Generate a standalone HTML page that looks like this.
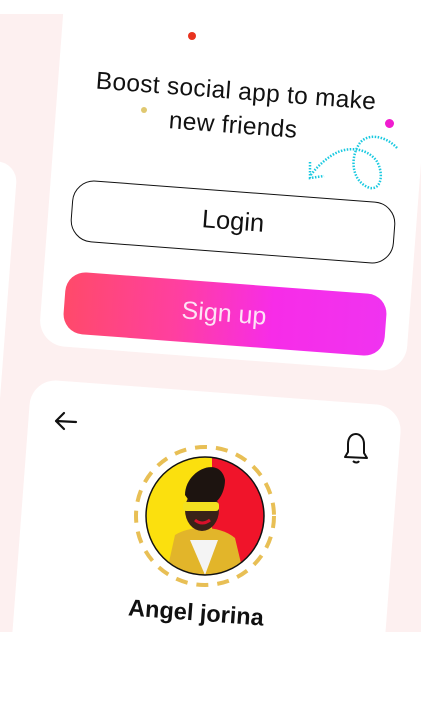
<!DOCTYPE html>
<html><head><meta charset="utf-8"><style>
html,body{margin:0;padding:0;width:421px;height:712px;background:#fff;overflow:hidden;font-family:"Liberation Sans",sans-serif;position:relative}
#bg{position:absolute;left:0;top:14px;width:421px;height:618px;background:#fdf0f0;overflow:hidden}
.r{position:absolute;transform:rotate(4.3deg);transform-origin:center}
.card{background:#fff;border-radius:26px}
.t{position:absolute;white-space:nowrap;transform:translate(-50%,-50%) rotate(4.3deg);color:#111}
</style></head><body>
<div id="bg">
  <div class="r card" style="left:-88px;top:145px;width:95px;height:290px;border-radius:20px"></div>
  <div class="r card" style="left:52px;top:-35px;width:368px;height:380px"></div>
  <div class="r card" style="left:16px;top:378px;width:372px;height:400px"></div>
  <div class="r" style="left:71px;top:177px;width:324px;height:62px;border:1.5px solid #111;border-radius:22px;box-sizing:border-box;background:#fff"></div>
  <div class="r" style="left:64px;top:269px;width:322px;height:62px;border-radius:20px;background:linear-gradient(90deg,#ff4a6a,#ff3fa0 35%,#f72ce8 65%,#f033f0)"></div>
</div>
<div class="t" style="left:236px;top:92px;font-size:24.5px;letter-spacing:0.3px">Boost social app to make</div>
<div class="t" style="left:233px;top:126px;font-size:24.5px;letter-spacing:0.3px">new friends</div>
<div class="t" style="left:233px;top:222px;font-size:25.5px">Login</div>
<div class="t" style="left:224px;top:314px;font-size:25px;color:#fde3f6">Sign up</div>
<div style="position:absolute;left:188px;top:32px;width:8px;height:8px;border-radius:50%;background:#e8331f"></div>
<div style="position:absolute;left:141px;top:107px;width:6px;height:6px;border-radius:50%;background:#e0c870"></div>
<div style="position:absolute;left:385px;top:119px;width:9px;height:9px;border-radius:50%;background:#f01ccf"></div>
<svg style="position:absolute;left:290px;top:110px" width="120" height="90" viewBox="0 0 120 90">
<g fill="none" stroke="#19c9e0" stroke-width="2.5" stroke-dasharray="1.5 1.5">
<path d="M107 38 C95 25 75 22 68 36 C60 50 62 72 80 78 C92 80 94 62 86 50 C76 38 58 36 44 44 C34 50 26 58 20 66"/>
<path d="M20 52 L20 68 L34 66"/>
</g></svg>
<svg style="position:absolute;left:52px;top:410px" width="30" height="24" viewBox="0 0 30 24"><path d="M24 12 L4 11 M12 3 L4 11 L12 19" fill="none" stroke="#111" stroke-width="2.2" stroke-linecap="round" stroke-linejoin="round"/></svg>
<svg style="position:absolute;left:340px;top:430px" width="32" height="36" viewBox="0 0 32 36"><path d="M5 27 L27 28 L24 23 L24 14 C24 8 20 4 16 4 C11 4 8 8 8 14 L8 22 Z M13 31 C15 33 18 33 19 31" fill="none" stroke="#111" stroke-width="2" stroke-linejoin="round"/></svg>
<svg style="position:absolute;left:130px;top:440px" width="150" height="150" viewBox="0 0 150 150">
<circle cx="75" cy="76" r="69" fill="none" stroke="#e8bf55" stroke-width="4" stroke-dasharray="12 9"/>
<defs><clipPath id="c"><circle cx="75" cy="76" r="59"/></clipPath></defs>
<g clip-path="url(#c)">
<rect x="0" y="0" width="82" height="150" fill="#fbe00e"/>
<rect x="82" y="0" width="80" height="150" fill="#f0142a"/>
<path d="M35 140 L45 95 C60 85 90 85 105 98 L115 140 Z" fill="#e2b52a"/>
<path d="M60 100 L75 135 L88 100 Z" fill="#f4f4f4"/>
<ellipse cx="72" cy="70" rx="17" ry="21" fill="#3a2218"/>
<path d="M55 55 C55 30 90 15 95 40 C95 50 90 60 85 62 L60 62 Z" fill="#1d1410"/>
<rect x="53" y="62" width="36" height="9" rx="3" fill="#f2e020"/>
<path d="M65 80 Q72 86 80 80" stroke="#d8102a" stroke-width="3" fill="none"/>
</g>
<circle cx="75" cy="76" r="59" fill="none" stroke="#111" stroke-width="1.5"/>
</svg>
<div class="t" style="left:196px;top:613px;font-size:23.5px;font-weight:bold">Angel jorina</div>
</body></html>
